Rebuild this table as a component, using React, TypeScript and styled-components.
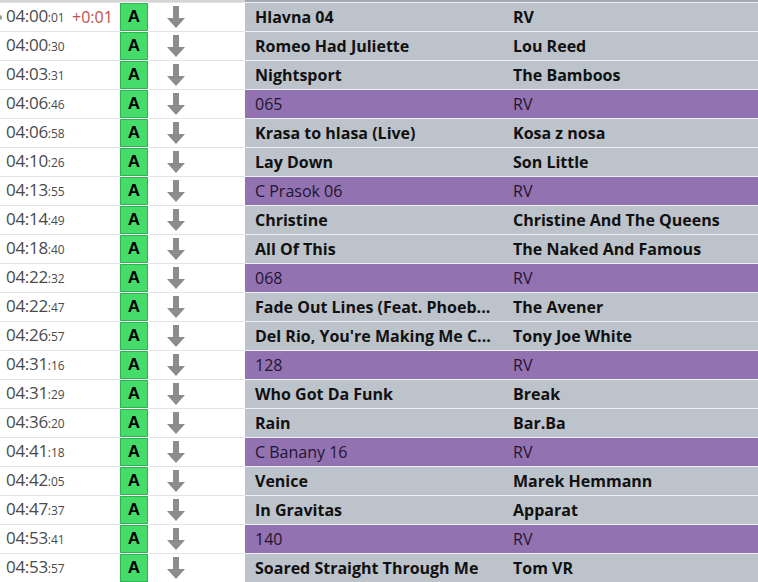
import styled, {createGlobalStyle} from "styled-components";

const GlobalStyle = createGlobalStyle`
    html, body {
        margin: 0;
        padding: 0;
        background: #ffffff;
        overflow: hidden;
    }
    body {
        font-family: "Open Sans", "Noto Sans", sans-serif;
    }
`;

type Entry = {
    time: string;
    sec: string;
    delta?: string;
    title: string;
    artist: string;
    jingle?: boolean;
};

const entries: Entry[] = [
    {time: '04:00', sec: ':01', delta: '+0:01', title: 'Hlavna 04', artist: 'RV'},
    {time: '04:00', sec: ':30', title: 'Romeo Had Juliette', artist: 'Lou Reed'},
    {time: '04:03', sec: ':31', title: 'Nightsport', artist: 'The Bamboos'},
    {time: '04:06', sec: ':46', title: '065', artist: 'RV', jingle: true},
    {time: '04:06', sec: ':58', title: 'Krasa to hlasa (Live)', artist: 'Kosa z nosa'},
    {time: '04:10', sec: ':26', title: 'Lay Down', artist: 'Son Little'},
    {time: '04:13', sec: ':55', title: 'C Prasok 06', artist: 'RV', jingle: true},
    {time: '04:14', sec: ':49', title: 'Christine', artist: 'Christine And The Queens'},
    {time: '04:18', sec: ':40', title: 'All Of This', artist: 'The Naked And Famous'},
    {time: '04:22', sec: ':32', title: '068', artist: 'RV', jingle: true},
    {time: '04:22', sec: ':47', title: 'Fade Out Lines (Feat. Phoeb...', artist: 'The Avener'},
    {time: '04:26', sec: ':57', title: "Del Rio, You're Making Me C...", artist: 'Tony Joe White'},
    {time: '04:31', sec: ':16', title: '128', artist: 'RV', jingle: true},
    {time: '04:31', sec: ':29', title: 'Who Got Da Funk', artist: 'Break'},
    {time: '04:36', sec: ':20', title: 'Rain', artist: 'Bar.Ba'},
    {time: '04:41', sec: ':18', title: 'C Banany 16', artist: 'RV', jingle: true},
    {time: '04:42', sec: ':05', title: 'Venice', artist: 'Marek Hemmann'},
    {time: '04:47', sec: ':37', title: 'In Gravitas', artist: 'Apparat'},
    {time: '04:53', sec: ':41', title: '140', artist: 'RV', jingle: true},
    {time: '04:53', sec: ':57', title: 'Soared Straight Through Me', artist: 'Tom VR'},
];

/**
 * Down arrow drawn in the move column.
 */
const DownArrow = () => <svg width="20" height="24" viewBox="0 0 20 24">
    <path d="M7 1 H13 V13 H19 L10 23 L1 13 H7 Z" fill="#8c8c8c"/>
</svg>;

const App = () => {
    return <>
        <GlobalStyle/>
        <List>
            <TopEdge>
                <TopEdgeLeft/>
                <TopEdgeRight/>
            </TopEdge>
            {entries.map((it, i) => <Row key={i}>
                <TimeCell>
                    {i === 0 && <Marker/>}
                    <Time>{it.time}<Seconds>{it.sec}</Seconds></Time>
                    {it.delta && <Delta>{it.delta}</Delta>}
                </TimeCell>
                <BadgeCell><Badge>A</Badge></BadgeCell>
                <ArrowCell><DownArrow/></ArrowCell>
                <Cells $jingle={!!it.jingle}>
                    <Title $jingle={!!it.jingle}>{it.title}</Title>
                    <Artist $jingle={!!it.jingle}>{it.artist}</Artist>
                </Cells>
            </Row>)}
        </List>
    </>;
};

export default App;

const List = styled.div`
    width: 758px;
    height: 582px;
    overflow: hidden;
`;

const TopEdge = styled.div`
    display: flex;
    height: 2px;
`;

const TopEdgeLeft = styled.div`
    width: 245px;
    background: #d4d4d4;
`;

const TopEdgeRight = styled.div`
    flex: 1;
    background: #a3a9b0;
`;

const Row = styled.div`
    display: flex;
    height: 29px;
`;

const TimeCell = styled.div`
    position: relative;
    width: 120px;
    box-sizing: border-box;
    border-top: 1px solid #e3e3e3;
    display: flex;
    align-items: center;
    padding-left: 6px;
    color: #555555;
`;

const Marker = styled.span`
    position: absolute;
    left: -3px;
    top: 12px;
    width: 5px;
    height: 5px;
    border-radius: 50%;
    background: #8a96a6;
`;

const Time = styled.span`
    font-size: 17px;
    line-height: 28px;
    letter-spacing: -0.3px;
    color: #4a4a4a;
    width: 66px;
`;

const Seconds = styled.span`
    font-size: 12px;
    letter-spacing: 0;
`;

const Delta = styled.span`
    font-size: 16px;
    line-height: 28px;
    color: #c0504d;
`;

const BadgeCell = styled.div`
    width: 28px;
    box-sizing: border-box;
    border-top: 1px solid #ffffff;
    display: flex;
`;

const Badge = styled.div`
    flex: 1;
    box-sizing: border-box;
    background: #46dc6a;
    border: 1px solid #2fb352;
    display: flex;
    align-items: center;
    justify-content: center;
    font-family: "Liberation Sans", Arial, sans-serif;
    font-weight: bold;
    font-size: 17px;
    color: #000000;
`;

const ArrowCell = styled.div`
    width: 97px;
    box-sizing: border-box;
    border-top: 1px solid #e3e3e3;
    display: flex;
    align-items: center;
    padding-left: 18px;
`;

const Cells = styled.div<{$jingle: boolean}>`
    flex: 1;
    display: flex;
    box-sizing: border-box;
    border-top: 1px solid #eef1f4;
    background: ${props => props.$jingle ? '#9372b1' : '#bcc3ca'};
    color: #111111;
    font-size: 16px;
    line-height: 28px;
`;

const Title = styled.div<{$jingle: boolean}>`
    width: 258px;
    box-sizing: border-box;
    padding-left: 10px;
    white-space: nowrap;
    overflow: hidden;
    font-weight: ${props => props.$jingle ? 400 : 700};
    color: ${props => props.$jingle ? '#1e1530' : '#111111'};
`;

const Artist = styled.div<{$jingle: boolean}>`
    flex: 1;
    padding-left: 10px;
    white-space: nowrap;
    overflow: hidden;
    font-weight: ${props => props.$jingle ? 400 : 700};
    color: ${props => props.$jingle ? '#1e1530' : '#111111'};
`;
